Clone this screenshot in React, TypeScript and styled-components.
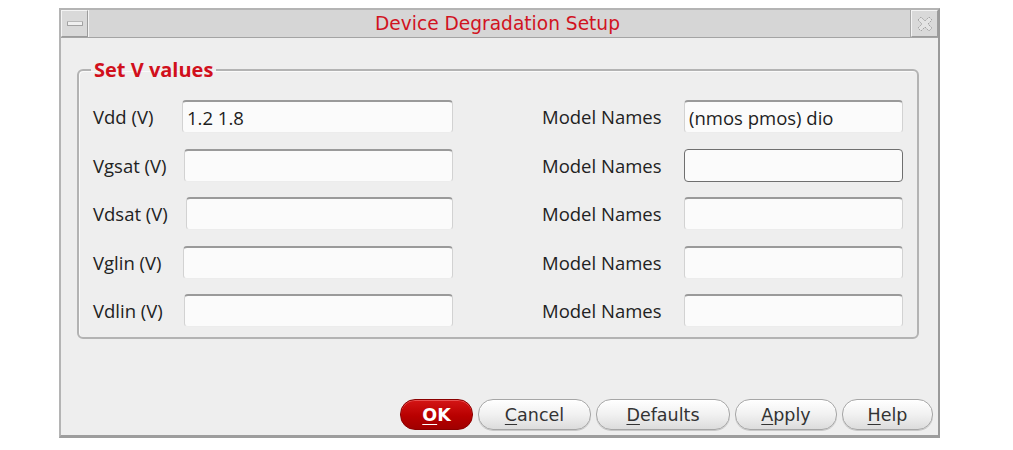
import React from "react";
import styled, { createGlobalStyle } from "styled-components";

const Global = createGlobalStyle`
  html, body { margin: 0; padding: 0; background: #ffffff; }
  body { font-family: "Open Sans", "DejaVu Sans", sans-serif; }
  * { box-sizing: border-box; }
`;

const Window = styled.div`
  margin: 8px 0 0 59px;
  width: 881px;
  height: 430px;
  display: flex;
  flex-direction: column;
  background: #eeeeee;
  border-top: 2px solid #b4b4b4;
  border-left: 2px solid #b4b4b4;
  border-right: 2px solid #9a9a9a;
  border-bottom: 3px solid #9d9d9d;
`;

const TitleBar = styled.div`
  height: 28px;
  display: flex;
  align-items: stretch;
  background: #d6d6d6;
  border-bottom: 1px solid #a4a4a4;
`;

const TitleButton = styled.div`
  width: 27px;
  display: flex;
  align-items: center;
  justify-content: center;
  background: #d9d9d9;
  border-top: 1px solid #f4f4f4;
  border-left: 1px solid #f4f4f4;
  border-right: 1px solid #9c9c9c;
  border-bottom: 1px solid #9c9c9c;
`;

const Dash = styled.div`
  width: 16px;
  height: 5px;
  border-radius: 1px;
  background: #f0f0f0;
  border: 1px solid #a2a2a2;
  border-top-color: #b8b8b8;
`;

const Title = styled.div`
  flex: 1;
  display: flex;
  align-items: center;
  justify-content: center;
  font-family: "DejaVu Sans", sans-serif;
  font-size: 18.6px;
  color: #d1131f;
  padding-right: 4px;
  border-left: 1px solid #f4f4f4;
  border-right: 1px solid #a8a8a8;
`;

const Body = styled.div`
  flex: 1;
  display: flex;
  flex-direction: column;
  justify-content: space-between;
  padding: 22px 21px 0 16px;
`;

const Group = styled.fieldset`
  margin: 0;
  padding: 20px 14px 10px 14px;
  border: 2px solid #b3b3b3;
  border-radius: 6px;
  box-shadow: inset 1px 1px 0 #fafafa;
`;

const Legend = styled.legend`
  margin-left: -2px;
  padding: 0 3px;
  font-family: "Open Sans", sans-serif;
  font-weight: 700;
  font-size: 20px;
  line-height: 20px;
  color: #d1101c;
`;

const FormGrid = styled.div`
  display: grid;
  grid-template-columns: 89px 271px 231px 219px;
  row-gap: 15.5px;
  align-items: center;
`;

const FieldLabel = styled.label<{ $indent?: number }>`
  padding-left: ${(p) => p.$indent ?? 0}px;
  font-family: "Open Sans", sans-serif;
  font-size: 18.5px;
  color: #222222;
  white-space: nowrap;
`;

const Field = styled.input<{ $focused?: boolean; $shift?: number }>`
  height: 33px;
  width: calc(100% - ${(p) => p.$shift ?? 0}px);
  margin-left: ${(p) => p.$shift ?? 0}px;
  padding: 0 4px;
  font-family: "Open Sans", sans-serif;
  font-size: 18.5px;
  color: #1e1e1e;
  background: #fbfbfb;
  outline: none;
  border-radius: 4px;
  border: ${(p) => (p.$focused ? "1.5px solid #6f6f6f" : "1px solid #d2d2d2")};
  border-top: ${(p) => (p.$focused ? "1.5px solid #6f6f6f" : "2px solid #9a9a9a")};
  border-bottom-color: ${(p) => (p.$focused ? "#6f6f6f" : "#ececec")};
`;

const Footer = styled.div`
  display: flex;
  justify-content: flex-end;
  gap: 5px;
  margin-right: -16px;
  padding-bottom: 5px;
`;

const Button = styled.button<{ $w: number; $primary?: boolean }>`
  width: ${(p) => p.$w}px;
  height: 31px;
  border-radius: 15px;
  font-family: "DejaVu Sans", sans-serif;
  font-size: 17.5px;
  font-weight: ${(p) => (p.$primary ? 700 : 400)};
  color: ${(p) => (p.$primary ? "#ffffff" : "#333333")};
  border: 1px solid ${(p) => (p.$primary ? "#8a0000" : "#a6a6a6")};
  background: ${(p) =>
    p.$primary
      ? "linear-gradient(#d41515, #b80000 55%, #a00000)"
      : "linear-gradient(#ffffff, #f1f1f1 50%, #dcdcdc)"};
  box-shadow: ${(p) =>
    p.$primary ? "inset 0 1px 0 #e85050" : "inset 0 1px 0 #ffffff, 0 1px 0 #c8c8c8"};
  padding: 0;
  display: flex;
  align-items: center;
  justify-content: center;
  & u { text-underline-offset: 3px; }
`;

const rows = [
  { label: "Vdd (V)", value: "1.2 1.8", shift: 0 },
  { label: "Vgsat (V)", value: "", shift: 2 },
  { label: "Vdsat (V)", value: "", shift: 4 },
  { label: "Vglin (V)", value: "", shift: 1 },
  { label: "Vdlin (V)", value: "", shift: 2 },
];

const models = ["(nmos pmos) dio", "", "", "", ""];

const CloseIcon = () => (
  <svg width="18" height="18" viewBox="0 0 18 18">
    <polygon
      points="2,5 5,2 9,6 13,2 16,5 12,9 16,13 13,16 9,12 5,16 2,13 6,9"
      fill="#e4e4e4"
      stroke="#a4a4a4"
      strokeWidth="1"
      strokeDasharray="2 1"
    />
  </svg>
);

export default function App() {
  return (
    <>
      <Global />
      <Window>
        <TitleBar>
          <TitleButton>
            <Dash />
          </TitleButton>
          <Title>Device Degradation Setup</Title>
          <TitleButton>
            <CloseIcon />
          </TitleButton>
        </TitleBar>
        <Body>
          <Group>
            <Legend>Set V values</Legend>
            <FormGrid>
              {rows.map((r, i) => (
                <React.Fragment key={r.label}>
                  <FieldLabel>{r.label}</FieldLabel>
                  <Field $shift={r.shift} defaultValue={r.value} />
                  <FieldLabel $indent={89}>Model Names</FieldLabel>
                  <Field $focused={i === 1} defaultValue={models[i]} />
                </React.Fragment>
              ))}
            </FormGrid>
          </Group>
          <Footer>
            <Button $w={73} $primary>
              <u>O</u>K
            </Button>
            <Button $w={113}>
              <u>C</u>ancel
            </Button>
            <Button $w={134}>
              <u>D</u>efaults
            </Button>
            <Button $w={102}>
              <u>A</u>pply
            </Button>
            <Button $w={91}>
              <u>H</u>elp
            </Button>
          </Footer>
        </Body>
      </Window>
    </>
  );
}
